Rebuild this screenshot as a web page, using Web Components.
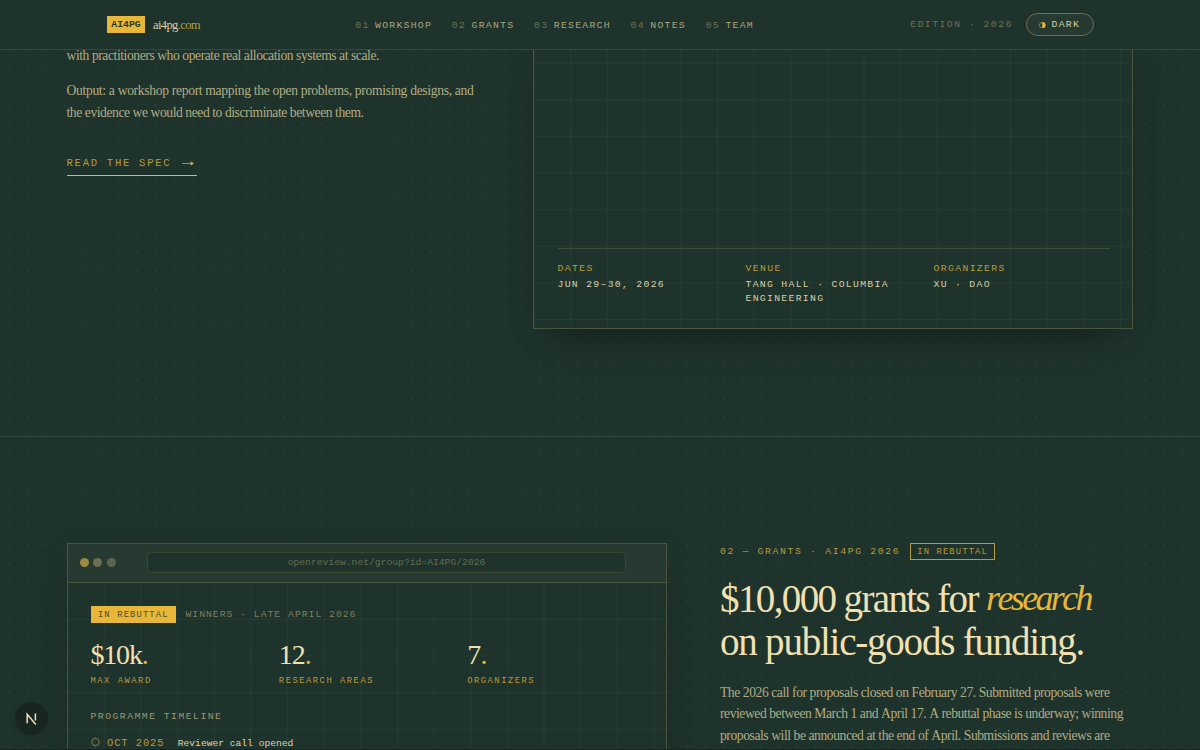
<!DOCTYPE html>
<html lang="en">
<head>
<meta charset="utf-8">
<title>ai4pg.com</title>
<style>
    :root {
        --bg: #1f332d;
        --raised: #263a32;
        --frame: #4a5639;
        --cream: #f0e0b2;
        --soft: #b2ad83;
        --mute: #6c7150;
        --gold: #e8b639;
        --gold-dim: #b79a3c;
        --mono: "Liberation Mono", monospace;
        --serif: "Liberation Serif", serif;
    }
    html, body { margin: 0; height: 750px; overflow: hidden; }
    body { background: var(--bg); color: var(--soft); font-family: var(--serif); }
</style>
</head>
<body>
<landing-page></landing-page>

<script>
// One line of serif text, tracked so that it fills the given measure.
class SetLine extends HTMLElement {
    constructor() {
        super();
        this.attachShadow({ mode: "open" });
        this.shadowRoot.innerHTML = `
        <style>
            :host { display: block; width: max-content; white-space: nowrap; font-kerning: none; }
        </style>
        <slot></slot>`;
    }

    connectedCallback() {
        const measure = Number(this.getAttribute("measure"));
        const natural = this.getBoundingClientRect().width;
        const count = this.textContent.length;
        this.style.letterSpacing = `${(measure - natural) / count}px`;
    }
}

class NavItem extends HTMLElement {
    constructor() {
        super();
        this.attachShadow({ mode: "open" });
    }

    connectedCallback() {
        this.shadowRoot.innerHTML = `
        <style>
            :host { display: flex; gap: 5.5px; color: #aaa67e; }
            span { color: var(--mute); }
        </style>
        <span>${this.getAttribute("num")}</span><slot></slot>`;
    }
}

class StatusTag extends HTMLElement {
    constructor() {
        super();
        this.attachShadow({ mode: "open" });
        this.shadowRoot.innerHTML = `
        <style>
            :host {
                display: block;
                box-sizing: border-box;
                height: 17px;
                padding: 0 6.4px;
                border: 1px solid var(--gold-dim);
                font: 8.8px/16.5px var(--mono);
                letter-spacing: 1.155px;
                color: var(--gold-dim);
                white-space: nowrap;
            }
            :host([solid]) { background: var(--gold); border-color: var(--gold); color: #4a4f2c; }
        </style>
        <slot></slot>`;
    }
}

class SiteHeader extends HTMLElement {
    constructor() {
        super();
        this.attachShadow({ mode: "open" });
        this.shadowRoot.innerHTML = `
        <style>
            :host {
                display: flex;
                align-items: center;
                justify-content: space-between;
                box-sizing: border-box;
                height: 50px;
                padding: 0 106.5px;
                background: var(--bg);
                border-bottom: 1px solid #34493a;
                font: 9.8px/12px var(--mono);
                position: relative;
                z-index: 2;
            }
            .brand { display: flex; align-items: center; gap: 8px; width: 248.8px; }
            .logo {
                box-sizing: border-box;
                width: 38.5px;
                height: 17px;
                padding-left: 4.8px;
                background: var(--gold);
                color: #2b3a26;
                font-weight: bold;
                line-height: 17px;
            }
            .name { font: 12.6px/16px var(--serif); color: #d9cfa4; }
            .name i { font-style: normal; color: var(--gold-dim); }
            nav { display: flex; gap: 19.7px; letter-spacing: 1.25px; flex: 1; padding-top: 2.5px; }
            .right { display: flex; align-items: center; gap: 13.2px; }
            .edition { letter-spacing: 1.45px; color: var(--mute); padding-top: 1px; }
            button {
                display: flex;
                align-items: center;
                gap: 6px;
                box-sizing: border-box;
                width: 67.5px;
                height: 23px;
                padding: 1px 0 0 12px;
                border: 1px solid #716f4c;
                border-radius: 12px;
                background: var(--raised);
                color: #d5cca2;
                font: 9.8px/12px var(--mono);
                letter-spacing: 1.27px;
            }
            svg { width: 6.5px; height: 6.5px; }
        </style>
        <div class="brand">
            <span class="logo">AI4PG</span>
            <set-line class="name" measure="47">ai4pg<i>.com</i></set-line>
        </div>
        <nav>
            <nav-item num="01">WORKSHOP</nav-item>
            <nav-item num="02">GRANTS</nav-item>
            <nav-item num="03">RESEARCH</nav-item>
            <nav-item num="04">NOTES</nav-item>
            <nav-item num="05">TEAM</nav-item>
        </nav>
        <div class="right">
            <span class="edition">EDITION · 2026</span>
            <button>
                <svg viewBox="0 0 10 10"><circle cx="5" cy="5" r="4.4" fill="none" stroke="#b79a3c"/><path d="M5 0a5 5 0 0 1 0 10z" fill="#e8b639"/></svg>
                DARK
            </button>
        </div>`;
    }
}

// Framed panel with the blueprint grid behind its content.
class GridPanel extends HTMLElement {
    constructor() {
        super();
        this.attachShadow({ mode: "open" });
        this.shadowRoot.innerHTML = `
        <style>
            :host {
                display: flex;
                flex-direction: column;
                box-sizing: border-box;
                width: 600px;
                border: 1px solid var(--frame);
                background-color: var(--bg);
                background-image:
                    linear-gradient(#263b33 1px, transparent 1px),
                    linear-gradient(90deg, #263b33 1px, transparent 1px);
                background-size: 36.667px 36.667px;
                background-position: 0 var(--grid-y, 0px), var(--grid-x, 0px) 0;
                box-shadow: 0 24px 36px -22px rgba(0, 0, 0, 0.42), 0 6px 30px rgba(0, 0, 0, 0.08);
            }
        </style>
        <slot></slot>`;
    }
}

class VenueFacts extends HTMLElement {
    constructor() {
        super();
        this.attachShadow({ mode: "open" });
        this.shadowRoot.innerHTML = `
        <style>
            :host {
                display: grid;
                grid-template-columns: repeat(3, 1fr);
                gap: 12px;
                margin: 0 22.4px 23px 23.6px;
                padding-top: 13px;
                border-top: 1px solid #3e4c37;
                font: 9.8px/13.3px var(--mono);
            }
            dl { margin: 0; }
            dt { color: var(--gold-dim); letter-spacing: 1.35px; margin-bottom: 3.1px; }
            dd { margin: 0; color: #d9cfa5; letter-spacing: 1.29px; white-space: nowrap; }
        </style>
        <dl><dt>DATES</dt><dd>JUN 29–30, 2026</dd></dl>
        <dl><dt>VENUE</dt><dd>TANG HALL · COLUMBIA<br>ENGINEERING</dd></dl>
        <dl><dt>ORGANIZERS</dt><dd>XU · DAO</dd></dl>`;
    }
}

class BrowserBar extends HTMLElement {
    constructor() {
        super();
        this.attachShadow({ mode: "open" });
    }

    connectedCallback() {
        this.shadowRoot.innerHTML = `
        <style>
            :host {
                display: flex;
                align-items: center;
                box-sizing: border-box;
                height: 39px;
                padding: 0 40px 1px 12.6px;
                gap: 4.4px;
                background: var(--raised);
                border-bottom: 1px solid var(--frame);
            }
            i { width: 9px; height: 9px; border-radius: 50%; background: #5b654a; }
            i:nth-of-type(1) { background: #9c8b3e; }
            i:nth-of-type(2) { background: #6d7050; }
            .url {
                flex: 1;
                box-sizing: border-box;
                height: 21px;
                margin-left: 27.2px;
                border: 1px solid #39482f;
                border-radius: 4.5px;
                background: var(--bg);
                color: #656a4b;
                text-align: center;
                font: 9.7px/19px var(--mono);
            }
        </style>
        <i></i><i></i><i></i>
        <div class="url">${this.getAttribute("url")}</div>`;
    }
}

class StatFigure extends HTMLElement {
    constructor() {
        super();
        this.attachShadow({ mode: "open" });
    }

    connectedCallback() {
        this.shadowRoot.innerHTML = `
        <style>
            :host { display: block; }
            .value { font: 28px/29px var(--serif); color: var(--cream); }
            .value b { font-weight: normal; color: var(--gold); }
            .label { margin-top: 6.5px; font: 8.8px/11px var(--mono); letter-spacing: 1.52px; color: var(--gold-dim); white-space: nowrap; }
        </style>
        <set-line class="value" measure="${this.getAttribute("measure")}">${this.getAttribute("value")}<b>.</b></set-line>
        <div class="label"><slot></slot></div>`;
    }
}

class GrantBoard extends HTMLElement {
    constructor() {
        super();
        this.attachShadow({ mode: "open" });
        this.shadowRoot.innerHTML = `
        <style>
            :host { display: block; padding: 22.6px 23px 0; font-family: var(--mono); }
            .status { display: flex; align-items: center; gap: 9.4px; font-size: 9.8px; line-height: 17px; letter-spacing: 0.96px; color: #7c7e5b; }
            .stats { display: grid; grid-template-columns: repeat(3, 1fr); gap: 13px; margin-top: 17.5px; }
            h3 { margin: 24.5px 0 0; font: 9.8px/12px var(--mono); letter-spacing: 1.45px; color: #999870; }
            .row { display: flex; align-items: flex-start; margin-top: 14px; height: 26px; line-height: 13px; }
            svg { width: 9px; height: 22px; margin-right: 7.5px; flex: none; }
            time { width: 70.8px; font-size: 10.4px; letter-spacing: 0.94px; color: var(--gold-dim); }
            .event { font-size: 9.63px; color: #ddd3a8; }
        </style>
        <div class="status"><status-tag solid>IN REBUTTAL</status-tag><span>WINNERS · LATE APRIL 2026</span></div>
        <div class="stats">
            <stat-figure value="$10k" measure="57">MAX AWARD</stat-figure>
            <stat-figure value="12" measure="32">RESEARCH AREAS</stat-figure>
            <stat-figure value="7" measure="19.5">ORGANIZERS</stat-figure>
        </div>
        <h3>PROGRAMME TIMELINE</h3>
        <div class="row">
            <svg viewBox="0 0 9 22" fill="none" stroke="#696d4c"><circle cx="4.5" cy="5" r="3.6" stroke-width="1.3"/><path d="M4.5 9v13M4.5 0v1.2" stroke="#3c4c38"/></svg>
            <time>OCT 2025</time><span class="event">Reviewer call opened</span>
        </div>`;
    }
}

class WorkshopCopy extends HTMLElement {
    constructor() {
        super();
        this.attachShadow({ mode: "open" });
        this.shadowRoot.innerHTML = `
        <style>
            :host { display: block; color: var(--soft); font: 13.6px/21.7px var(--serif); }
            p { margin: 0 0 13.4px; }
            a {
                display: flex;
                align-items: center;
                box-sizing: border-box;
                width: 130px;
                height: 25px;
                margin-top: 27.6px;
                border-bottom: 1px solid var(--gold);
                color: var(--gold-dim);
                font: 10.6px/14px var(--mono);
                letter-spacing: 1.71px;
                white-space: nowrap;
            }
            svg { width: 12px; height: 7px; margin-left: 10.5px; }
        </style>
        <p><set-line measure="312.5">with practitioners who operate real allocation systems at scale.</set-line></p>
        <p>
            <set-line measure="407">Output: a workshop report mapping the open problems, promising designs, and</set-line>
            <set-line measure="297">the evidence we would need to discriminate between them.</set-line>
        </p>
        <a>READ THE SPEC<svg viewBox="0 0 12 7"><path d="M0 3.5h10" stroke="#b79a3c" stroke-width="0.9"/><path d="M8.6 1.2L12 3.5 8.6 5.8z" fill="#d0a93b"/></svg></a>`;
    }
}

class GrantsCopy extends HTMLElement {
    constructor() {
        super();
        this.attachShadow({ mode: "open" });
        this.shadowRoot.innerHTML = `
        <style>
            :host { display: block; color: var(--soft); }
            .eyebrow { display: flex; align-items: center; gap: 9.6px; font: 9.8px/17px var(--mono); letter-spacing: 1.63px; color: var(--gold-dim); }
            h2 { margin: 16.5px 0 0; font: normal 39px/43.5px var(--serif); color: var(--cream); }
            .first { display: flex; }
            em { color: var(--gold); font-size: 36px; }
            p { margin: 18px 0 0; font: 13.6px/21.7px var(--serif); }
        </style>
        <div class="eyebrow"><span>02 — GRANTS · AI4PG 2026</span><status-tag>IN REBUTTAL</status-tag></div>
        <h2>
            <div class="first"><set-line measure="266">$10,000 grants for&nbsp;</set-line><em><set-line measure="105">research</set-line></em></div>
            <set-line measure="364">on public-goods funding.</set-line>
        </h2>
        <p>
            <set-line measure="389.5">The 2026 call for proposals closed on February 27. Submitted proposals were</set-line>
            <set-line measure="403">reviewed between March 1 and April 17. A rebuttal phase is underway; winning</set-line>
            <set-line measure="389.5">proposals will be announced at the end of April. Submissions and reviews are</set-line>
        </p>`;
    }
}

class LandingPage extends HTMLElement {
    constructor() {
        super();
        this.attachShadow({ mode: "open" });
        this.shadowRoot.innerHTML = `
        <style>
            :host {
                display: block;
                position: relative;
                height: 750px;
                overflow: hidden;
                background: radial-gradient(circle at center, #293e35 0.8px, transparent 1.2px) 0 4.8px / 18.333px 18.333px var(--bg);
            }
            section { display: flex; justify-content: space-between; box-sizing: border-box; padding: 0 66.5px; }
            .workshop { height: 387px; border-bottom: 1px solid #34493a; }
            .workshop grid-panel { height: 298px; margin: -19px 0.6px 0 0; justify-content: flex-end; --grid-y: -6.2px; --grid-x: -0.4px; }
            workshop-copy { margin-top: -5px; }
            .grants { padding-top: 106px; justify-content: flex-start; gap: 53.5px; }
            .grants grid-panel { height: 300px; --grid-y: 1.6px; --grid-x: -1px; }
            .badge {
                position: absolute;
                left: 15px;
                top: 702px;
                width: 33px;
                height: 33px;
                border-radius: 50%;
                background: #172620;
                box-shadow: 0 2px 8px rgba(0, 0, 0, 0.12);
            }
            .edge { position: absolute; left: 0; right: 0; bottom: 0; height: 1px; background: #18241f; }
        </style>
        <site-header></site-header>
        <section class="workshop">
            <workshop-copy></workshop-copy>
            <grid-panel><venue-facts></venue-facts></grid-panel>
        </section>
        <section class="grants">
            <grid-panel>
                <browser-bar url="openreview.net/group?id=AI4PG/2026"></browser-bar>
                <grant-board></grant-board>
            </grid-panel>
            <grants-copy></grants-copy>
        </section>
        <svg class="badge" viewBox="0 0 33 33" fill="none" stroke="#f0e0b2" stroke-width="1.5"><path d="M12.2 21.2V12.3l8.6 10.2M20.4 11.6v6.8"/></svg>
        <div class="edge"></div>`;
    }
}

customElements.define("set-line", SetLine);
customElements.define("nav-item", NavItem);
customElements.define("status-tag", StatusTag);
customElements.define("site-header", SiteHeader);
customElements.define("grid-panel", GridPanel);
customElements.define("venue-facts", VenueFacts);
customElements.define("browser-bar", BrowserBar);
customElements.define("stat-figure", StatFigure);
customElements.define("grant-board", GrantBoard);
customElements.define("workshop-copy", WorkshopCopy);
customElements.define("grants-copy", GrantsCopy);
customElements.define("landing-page", LandingPage);
</script>
</body>
</html>
